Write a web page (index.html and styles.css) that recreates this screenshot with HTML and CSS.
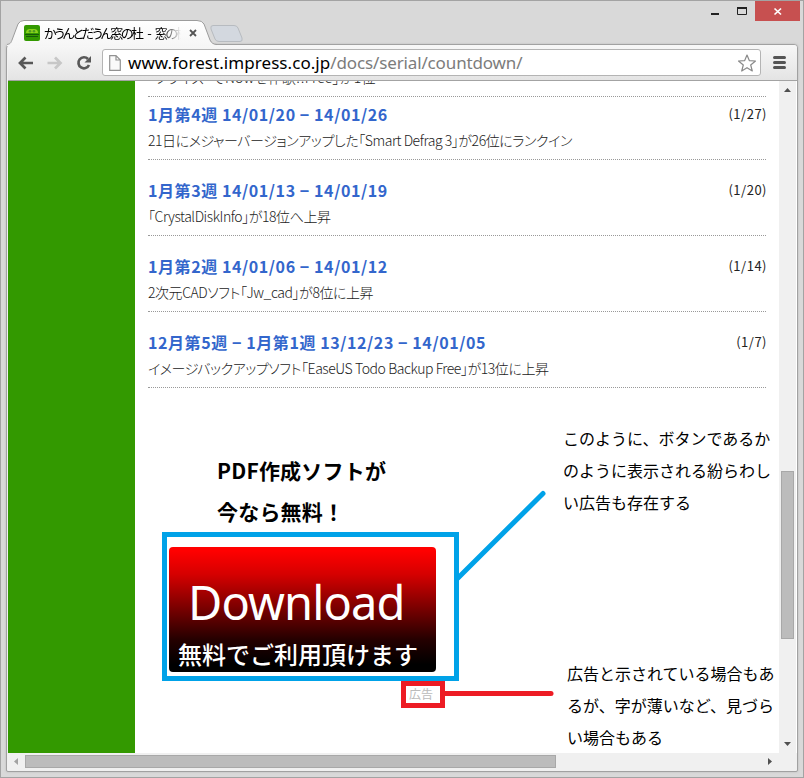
FILE: index.html
```html
<!DOCTYPE html>
<html lang="ja">
<head>
<meta charset="utf-8">
<title>かうんとだうん窓の杜 - 窓の杜</title>
<link rel="stylesheet" href="styles.css">
</head>
<body>
<div class="window">
  <header class="tabstrip">
    <svg class="tab-shapes" width="250" height="28" viewBox="0 0 250 28">
      <defs><linearGradient id="tabfill" x1="0" y1="0" x2="0" y2="1"><stop offset="0" stop-color="#fff"/><stop offset="1" stop-color="#f6f6f6"/></linearGradient></defs>
      <path d="M0 26.5C4 26 4 24 5 22L11 6Q13 2.500 17 2.500H190Q195 2.500 197 6L203 22Q205 26.500 210 26.500V28H0Z" fill="url(#tabfill)"/>
      <path d="M0 26.5C4 26 4 24 5 22L11 6Q13 2.500 17 2.500H190Q195 2.500 197 6L203 22Q205 26.500 210 26.500" fill="none" stroke="#9c9c9c"/>
      <path d="M206 7.500H227Q230 7.500 231 10L235 20Q236 23.500 233 23.500H212Q209 23.500 208 21L204 11Q203 7.500 206 7.500Z" fill="#d3d8df" stroke="#b7bbc0"/>
    </svg>
    <div class="tab">
      <svg class="favicon" width="16" height="16" viewBox="0 0 16 16"><rect width="16" height="16" rx="2" fill="#390"/><path d="M2 8Q2 4 6 4H10Q14 4 14 8Z" fill="#8bd21c"/><circle cx="6" cy="6.300" r="1.300" fill="#4c9a23"/><circle cx="10" cy="6.300" r="1.300" fill="#4c9a23"/><path d="M1 9.500H15M2 11.500H14" stroke="#165a09"/></svg>
      <span class="tab-title">かうんとだうん窓の杜 - 窓の杜</span>
      <svg class="tab-close" width="8" height="8" viewBox="0 0 8 8"><path d="M1 1L7 7M7 1L1 7" stroke="#555" stroke-width="1.800"/></svg>
    </div>
    <div class="controls">
      <svg width="89" height="20" viewBox="0 0 89 20"><path d="M0 13H8" stroke="#222" stroke-width="2"/><path d="M26.500 7V13.500H35.500V7" fill="none" stroke="#222"/><path d="M26 7H36" stroke="#222" stroke-width="2"/><rect x="44" width="45" height="20" fill="#c75050"/><path d="M63.500 7.500L70 13.500M70 7.500L63.500 13.500" stroke="#fff" stroke-width="1.700"/></svg>
    </div>
  </header>
  <main class="frame">
    <nav class="toolbar">
      <svg class="nav-icons" width="76" height="18" viewBox="0 0 76 18"><g fill="none" stroke-width="2.700"><path d="M8.500 3.500L3 9L8.500 14.500M3 9H16" stroke="#585858"/><path d="M38 3.500L43.500 9L38 14.500M30.500 9H43.500" stroke="#c7c7c7"/><path d="M71 5A5.500 5.500 0 1 0 72 11" stroke="#585858"/></g><path d="M74 2V8.500H67.500Z" fill="#585858"/></svg>
      <div class="address">
        <svg width="12" height="16" viewBox="0 0 12 16"><path d="M.7.700H7L11.300 5V15.300H.7Z M7 .7V5H11.300" fill="#fafafa" stroke="#929292" stroke-width="1.200"/></svg>
        <span class="url">www.forest.impress.co.jp</span><span class="path">/docs/serial/countdown/</span>
        <svg class="star" width="20" height="18" viewBox="0 0 20 18"><path d="M10 1L12.300 6.600L18.500 7L13.700 11L15.300 17L10 13.700L4.700 17L6.300 11L1.500 7L7.700 6.600Z" fill="#fff" stroke="#8a8a8a" stroke-width="1.200" stroke-linejoin="round"/></svg>
      </div>
      <svg class="menu" width="13" height="13" viewBox="0 0 13 13"><path d="M1.500 1.500H11.500M1.500 6.500H11.500M1.500 11.500H11.500" stroke="#555" stroke-width="3" stroke-linecap="round"/></svg>
    </nav>
    <div class="viewport">
      <div class="sidebar"></div>
      <div class="page">
        <section class="weeks">
          <article class="week clipped"><p class="desc">「フライズ・でNowを作歌!!Free」が1位</p></article>
          <article class="week first"><h2>1月第4週 14/01/20 − 14/01/26</h2><time>(1/27)</time><p class="desc">21日にメジャーバージョンアップした「Smart Defrag 3」が26位にランクイン</p></article>
          <article class="week"><h2>1月第3週 14/01/13 − 14/01/19</h2><time>(1/20)</time><p class="desc">「CrystalDiskInfo」が18位へ上昇</p></article>
          <article class="week"><h2>1月第2週 14/01/06 − 14/01/12</h2><time>(1/14)</time><p class="desc">2次元CADソフト「Jw_cad」が8位に上昇</p></article>
          <article class="week"><h2>12月第5週 − 1月第1週 13/12/23 − 14/01/05</h2><time>(1/7)</time><p class="desc">イメージバックアップソフト「EaseUS Todo Backup Free」が13位に上昇</p></article>
        </section>
        <section class="promo">
          <div class="ad">
            <h3>PDF作成ソフトが<br>今なら無料！</h3>
            <div class="highlight"><div class="download"><span class="dl">Download</span><span class="free">無料でご利用頂けます</span></div></div>
            <span class="ad-label">広告</span>
          </div>
          <div class="notes">
            <p>このように、ボタンであるか<br>のように表示される紛らわし<br>い広告も存在する</p>
            <p class="second">広告と示されている場合もあ<br>るが、字が薄いなど、見づら<br>い場合もある</p>
          </div>
          <svg class="callouts" width="110" height="220" viewBox="0 0 110 220"><path d="M12 92L97 7.500" stroke="#00a2e8" stroke-width="5" stroke-linecap="round"/><path d="M-3 207.500H105" stroke="#ed1c24" stroke-width="5" stroke-linecap="round"/></svg>
        </section>
      </div>
      <div class="vscroll"><svg width="17" height="17" viewBox="0 0 17 17"><path d="M5 11L8.500 7L12 11Z" fill="#505050"/></svg><div class="vthumb"></div><svg width="17" height="17" viewBox="0 0 17 17"><path d="M5 6L8.500 10L12 6Z" fill="#505050"/></svg></div>
    </div>
    <div class="hscroll"><svg width="17" height="17" viewBox="0 0 17 17"><path d="M10 5V12L6 8.500Z" fill="#a3a3a3"/></svg><div class="hthumb"></div><svg width="17" height="17" viewBox="0 0 17 17"><path d="M6 5V12L10 8.500Z" fill="#505050"/></svg></div>
  </main>
</div>
</body>
</html>
```
FILE: styles.css
```css
* { box-sizing: border-box; }
body, h2, h3, p { margin: 0; }
body { width: 804px; height: 778px; overflow: hidden; font-family: "Noto Sans CJK JP", sans-serif; }
svg { display: block; flex: none; }
.window { width: 804px; height: 778px; border: 1px solid #a3a3a3; background: #d9d9d9; padding: 0 5px 5px; }
.tabstrip { height: 43px; position: relative; }
.tab-shapes { position: absolute; left: 1px; top: 17px; z-index: 1; }
.tab { position: relative; z-index: 2; display: flex; align-items: center; height: 28px; padding-left: 18px; top: 18px; }
.tab-title { margin: -2px 0 0 4px; width: 137px; overflow: hidden; white-space: nowrap; font-size: 13px; letter-spacing: -2.400px; word-spacing: 5px; font-feature-settings: "palt"; mask-image: linear-gradient(90deg, #000 118px, transparent 137px); }
.tab-close { margin-left: 8px; }
.controls { position: absolute; right: -2px; top: 0; }
.frame { height: 728px; border: 1px solid #a1a1a1; border-radius: 4px 4px 2px 2px; padding: 0 0 1px 1px; background: #f0f0f0; box-shadow: 0 0 2px #9998; overflow: hidden; }
.toolbar { height: 36px; border-bottom: 1px solid #a3a3a3; background: linear-gradient(#f7f7f7, #e4e4e4); display: flex; align-items: center; padding-left: 9px; }
.address { width: 659px; height: 27px; margin-left: 9px; border: 1px solid #b4b4b4; border-radius: 3px; background: #fff; display: flex; align-items: center; padding: 0 3px 0 6px; }
.url, .path { font-family: "Noto Sans", sans-serif; font-size: 17px; line-height: 24px; letter-spacing: -.06px; }
.url { margin-left: 7px; color: #000; letter-spacing: .06px; }
.path { color: #7c7c7c; letter-spacing: -.14px; }
.star { margin-left: auto; }
.menu { margin-left: 12px; }
.viewport { display: flex; height: 672px; background: #fff; }
.sidebar { width: 127px; background: #390; }
.page { width: 644px; padding-left: 13px; overflow: hidden; }
.weeks { width: 618px; color: #222; }
.week { height: 76px; padding-top: 18px; display: grid; grid-template-columns: 1fr auto; grid-template-rows: 25px 26px; align-items: start; border-bottom: 1px dotted #999; white-space: nowrap; }
.week.clipped { display: flow-root; height: 16px; padding: 0; }
.week.clipped .desc { margin-top: -17px; letter-spacing: .2px; }
.week.first { height: 63px; padding-top: 5px; }
h2 { color: #36c; font: bold 16px/24px "Noto Sans CJK JP", sans-serif; letter-spacing: .58px; }
time { font-size: 13px; line-height: 24px; letter-spacing: .5px; margin-right: -1px; }
.desc { grid-column: 1 / 3; font-size: 14px; line-height: 26px; font-weight: 300; letter-spacing: -.44px; font-feature-settings: "palt"; }
.promo { position: relative; display: flex; height: 365px; }
.ad { width: 311px; padding: 62px 0 0 14px; }
h3 { padding-left: 55px; color: #000; font-size: 21px; line-height: 41px; letter-spacing: .2px; }
.highlight { width: 297px; height: 149px; border: 5px solid #00a2e8; padding: 10px 2px; }
.download { width: 267px; height: 125px; border-radius: 4px; background: linear-gradient(#f00 3%, #d50000 22%, #760000 50%, #250000 74%, #000 94%); color: #fff; display: flex; flex-direction: column; }
.dl { margin: 23px 0 0 19px; height: 64px; line-height: 64px; font-size: 47px; letter-spacing: -.9px; font-family: "Noto Sans", sans-serif; }
.free { margin: 2px 0 0 9px; line-height: 35px; font-size: 24px; font-weight: 500; white-space: nowrap; }
.ad-label { display: block; width: 44px; height: 27px; margin-left: 239px; border: 5px solid #ed1c24; color: #bbb; font-size: 12px; line-height: 16px; padding-left: 3px; }
.notes { margin-left: 104px; padding-top: 34px; width: 217px; color: #000; font-size: 16px; line-height: 32px; white-space: nowrap; }
.second { padding: 139px 0 0 4px; }
.callouts { position: absolute; left: 298px; top: 98px; overflow: visible; }
.vscroll { width: 17px; background: #f0f0f0; }
.vthumb { width: 13px; height: 168px; margin: 373px 2px 97px; background: #bcbcbc; border: 1px solid #a8a8a8; }
.hscroll { display: flex; height: 17px; }
.hthumb { width: 531px; height: 13px; margin: 2px 206px 2px 0; background: #bcbcbc; border: 1px solid #a8a8a8; }
```
